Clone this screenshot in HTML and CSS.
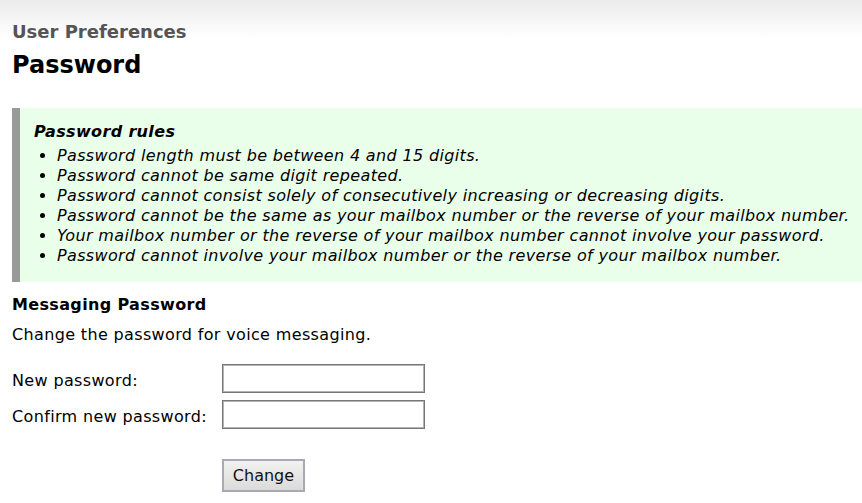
FILE: index.html
```html
<!DOCTYPE html>
<html lang="en">
<head>
    <meta charset="UTF-8">
    <meta name="viewport" content="width=device-width, initial-scale=1.0">
    <title>Password</title>
    <link rel="stylesheet" href="styles.css">
</head>
<body>
    <div class="page">
        <div class="crumb">User Preferences</div>
        <h1>Password</h1>

        <div class="rules">
            <p class="rules-title">Password rules</p>
            <ul>
                <li>Password length must be between 4 and 15 digits.</li>
                <li>Password cannot be same digit repeated.</li>
                <li>Password cannot consist solely of consecutively increasing or decreasing digits.</li>
                <li>Password cannot be the same as your mailbox number or the reverse of your mailbox number.</li>
                <li>Your mailbox number or the reverse of your mailbox number cannot involve your password.</li>
                <li>Password cannot involve your mailbox number or the reverse of your mailbox number.</li>
            </ul>
        </div>

        <h2>Messaging Password</h2>
        <p class="intro">Change the password for voice messaging.</p>

        <form class="pwform" onsubmit="return false">
            <label for="newPassword">New password:</label>
            <input type="password" id="newPassword">
            <label for="confirmPassword">Confirm new password:</label>
            <input type="password" id="confirmPassword">
            <div class="actions">
                <button type="submit">Change</button>
            </div>
        </form>
    </div>
</body>
</html>
```

FILE: styles.css
```css
body {
    margin: 0;
    padding: 0;
    font-family: "DejaVu Sans", Verdana, sans-serif;
    font-size: 16px;
    letter-spacing: 0.35px;
    color: #000;
    background: #fff linear-gradient(#ebebeb, #ffffff 38px) no-repeat;
}

.page {
    padding: 21px 0 0 12px;
}

.crumb {
    font-size: 18px;
    font-weight: bold;
    line-height: 22px;
    letter-spacing: 0;
    color: #555;
}

h1 {
    margin: 8px 0 0;
    font-size: 24px;
    line-height: 28px;
    letter-spacing: 0;
}

.rules {
    margin-top: 29px;
    padding: 14px 0 16px 14px;
    background-color: #eaffea;
    border-left: 8px solid #999;
    font-style: italic;
    line-height: 20px;
}

.rules-title {
    margin: 0 0 4px;
    font-weight: bold;
}

.rules ul {
    margin: 0;
    padding-left: 23px;
}

h2 {
    margin: 13px 0 0;
    font-size: 16px;
    line-height: 20px;
}

.intro {
    margin: 10px 0 0;
    line-height: 20px;
}

.pwform {
    margin-top: 19px;
    display: grid;
    grid-template-columns: 210px 203px;
    row-gap: 7px;
    align-items: center;
}

.pwform label {
    padding-top: 4px;
    line-height: 20px;
}

.pwform input {
    box-sizing: border-box;
    width: 203px;
    height: 29px;
    margin: 0;
    border: 1px solid #777;
    box-shadow: inset 0 0 0 1px #b4b4b4;
    background: #fff;
    font: inherit;
}

.actions {
    grid-column: 2;
    margin-top: 23px;
}

button {
    box-sizing: border-box;
    width: 83px;
    height: 33px;
    padding: 0;
    border: 2px solid #a9a9b5;
    background: linear-gradient(#f2f2f0, #dadada);
    font: inherit;
    letter-spacing: 0;
    color: #111;
    cursor: pointer;
}
```
